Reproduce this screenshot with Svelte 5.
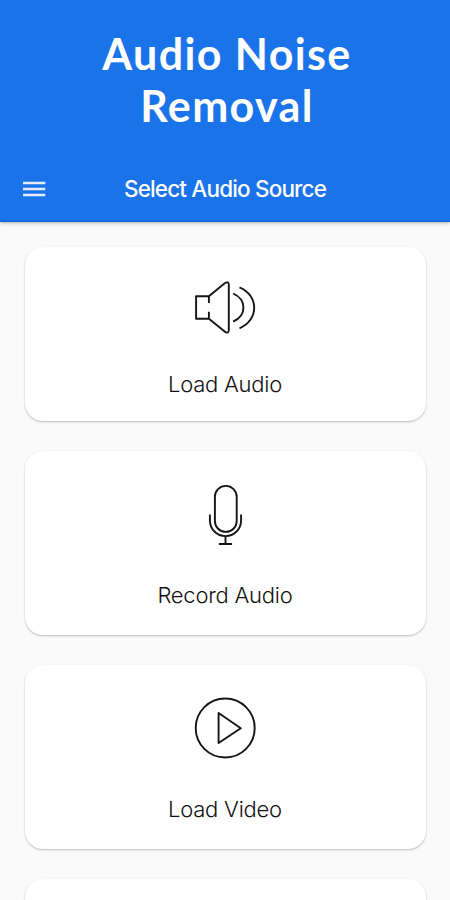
<script>
  const sources = [
    { id: 'speaker', label: 'Load Audio' },
    { id: 'mic', label: 'Record Audio' },
    { id: 'play', label: 'Load Video' }
  ];
</script>

<main class="screen">
  <header>
    <h1>Audio Noise<br />Removal</h1>
    <nav>
      <button aria-label="Menu">
        <svg width="24" height="18" viewBox="0 0 24 18">
          <path d="M1 3H23.3M1 9H23.3M1 15H23.3" stroke="#e4edff" stroke-width="2.7" fill="none" />
        </svg>
      </button>
      <h2>Select Audio Source</h2>
    </nav>
  </header>

  <section class="list">
    {#each sources as source}
      <article class="card {source.id}">
        <svg class="icon" width="71" height="70" viewBox="0 0 71 70">
          {#if source.id === 'speaker'}
            <path d="M18.9 29V22.2H6.1V44.7H18.9V37.8M18.9 22.2L34.7 9.3Q38.8 6.8 38.8 11V56Q38.8 60.2 34.7 57.6L18.9 44.7" />
            <path d="M43.1 19.5C56.9 25.5 56.9 41.7 43.1 47.7M49.5 13.3C69.1 21.5 69.1 46 49.5 54.3" />
          {:else if source.id === 'mic'}
            <rect x="24.9" y="7.9" width="21.8" height="46" rx="10.9" />
            <path d="M19.9 36.6V42.5A15.6 15.6 0 0 0 51.1 42.5V36.6M35.5 58.3V66M28.9 66H42.1" />
          {:else}
            <circle cx="35.2" cy="36" r="29.5" />
            <path d="M28.6 21V51L50.8 36.3Z" />
          {/if}
        </svg>
        <span class="label">{source.label}</span>
      </article>
    {/each}
    <article class="card next"></article>
  </section>
</main>

<style>
  :global(body) {
    margin: 0;
  }
  .screen {
    width: 450px;
    height: 900px;
    overflow: hidden;
    background: #fafafa;
    display: flex;
    flex-direction: column;
  }
  header {
    flex: none;
    box-sizing: border-box;
    height: 222px;
    padding-top: 28px;
    background: #1a73e8;
    color: #fff;
    box-shadow: inset 0 -1px #0b65df, 0 1px 4px rgba(0, 0, 0, 0.3);
  }
  h1 {
    margin: 0;
    padding-left: 4px;
    font: 700 43px/52px Lato, sans-serif;
    letter-spacing: 1.4px;
    text-align: center;
  }
  nav {
    display: grid;
    grid-template-columns: 70px 1fr 70px;
    align-items: center;
    height: 58px;
    margin-top: 28px;
  }
  button {
    border: 0;
    padding: 0 0 0 22px;
    background: none;
    display: flex;
  }
  h2 {
    margin: 0;
    font: 500 22.5px/30px Inter, sans-serif;
    letter-spacing: -0.84px;
    text-align: center;
    white-space: nowrap;
  }
  .list {
    display: flex;
    flex-direction: column;
    gap: 30px;
    padding: 25px 24px 0 25px;
  }
  .card {
    flex: none;
    box-sizing: border-box;
    height: 184px;
    padding-top: 27px;
    padding-right: 1px;
    border-radius: 18px;
    background: #fff;
    box-shadow: 0 1px 2px rgba(0, 0, 0, 0.26);
    display: flex;
    flex-direction: column;
    align-items: center;
  }
  .speaker {
    height: 174px;
  }
  .icon {
    flex: none;
    fill: none;
    stroke: #151515;
    stroke-width: 1.9;
    stroke-linejoin: round;
  }
  .label {
    margin-top: 32px;
    font: 300 22px/30px Inter, sans-serif;
    letter-spacing: -0.23px;
    color: #111;
  }
  .speaker .label {
    margin-top: 25px;
  }
</style>
